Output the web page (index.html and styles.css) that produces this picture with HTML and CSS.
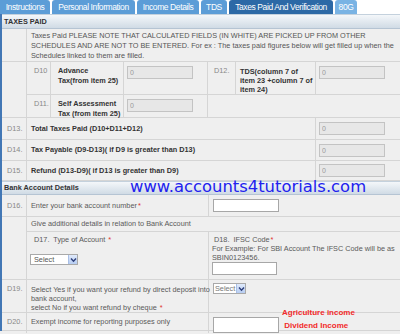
FILE: index.html
```html
<!DOCTYPE html>
<html>
<head>
<meta charset="utf-8">
<link rel="stylesheet" href="styles.css">
</head>
<body>
<div class="page">
  <nav class="tabs">
    <span class="tab tab-instr">Instructions</span>
    <span class="tab tab-personal">Personal Information</span>
    <span class="tab tab-income">Income Details</span>
    <span class="tab tab-tds">TDS</span>
    <span class="tab tab-active">Taxes Paid And Verification</span>
    <span class="tab tab-80g">80G</span>
  </nav>

  <div class="form">
    <div class="sec-head">TAXES PAID</div>

    <div class="row row-note">
      <div class="cell"></div>
      <div class="cell note">Taxes Paid PLEASE NOTE THAT CALCULATED FIELDS (IN WHITE) ARE PICKED UP FROM OTHER<br>SCHEDULES AND ARE NOT TO BE ENTERED. For ex : The taxes paid figures below will get filled up when the<br>Schedules linked to them are filled.</div>
    </div>

    <div class="row row-pair">
      <div class="cell"></div>
      <div class="pair">
        <div class="pc pnum">D10</div>
        <div class="pc plabel strong">Advance<br>Tax(from item 25)</div>
        <div class="pc pfield"><input class="inp ro" value="0" readonly></div>
        <div class="pc pnum pnum2">D12.</div>
        <div class="pc plabel plabel2 strong">TDS(column 7 of<br>item 23 +column 7 of<br>item 24)</div>
        <div class="pc pfield last"><input class="inp ro" value="0" readonly></div>

        <div class="pc pnum r2">D11.</div>
        <div class="pc plabel strong r2">Self Assessment<br>Tax (from item 25)</div>
        <div class="pc pfield r2"><input class="inp ro" value="0" readonly></div>
        <div class="pc pempty r2 last"></div>
      </div>
    </div>

    <div class="row row-3 h22">
      <div class="cell num">D13.</div>
      <div class="cell label strong">Total Taxes Paid (D10+D11+D12)</div>
      <div class="cell field"><input class="inp ro" value="0" readonly></div>
    </div>
    <div class="row row-3 h21">
      <div class="cell num">D14.</div>
      <div class="cell label strong">Tax Payable (D9-D13)( if D9 is greater than D13)</div>
      <div class="cell field"><input class="inp ro" value="0" readonly></div>
    </div>
    <div class="row row-3 h20">
      <div class="cell num">D15.</div>
      <div class="cell label strong">Refund (D13-D9)( if D13 is greater than D9)</div>
      <div class="cell field"><input class="inp ro" value="0" readonly></div>
    </div>

    <div class="sec-head sec-bank">Bank Account Details</div>

    <div class="row row-half h22">
      <div class="cell num">D16.</div>
      <div class="cell label">Enter your bank account number <span class="req">*</span></div>
      <div class="cell field2"><input class="inp white"></div>
    </div>

    <div class="row row-bank">
      <div class="cell"></div>
      <div class="bank">
        <div class="bc give">Give additional details in relation to Bank Account</div>
        <div class="bc d17">
          <div class="d17-label">D17.&nbsp; Type of Account <span class="req">*</span></div>
          <div class="sel sel-type"><span class="sel-text">Select</span><span class="sel-btn"><svg width="7" height="6" viewBox="0 0 7 6"><path d="M1 1.5 L3.5 4.2 L6 1.5" stroke="#2d3f7a" stroke-width="1.4" fill="none"/></svg></span></div>
        </div>
        <div class="bc d18">
          <div class="d18-title">&nbsp;D18.&nbsp; IFSC Code<span class="req">*</span></div>
          <div>For Example: For SBI Account The IFSC Code will be as<br>SBIN0123456.</div>
          <input class="inp white ifsc">
        </div>
      </div>
    </div>

    <div class="row row-half h33">
      <div class="cell num top">D19.</div>
      <div class="cell label top lh9">Select Yes if you want your refund by direct deposit into<br>bank account,<br>select No if you want refund by cheque <span class="req">*</span></div>
      <div class="cell field2 top"><div class="sel sel-yn"><span class="sel-text">Select</span><span class="sel-btn"><svg width="7" height="6" viewBox="0 0 7 6"><path d="M1 1.5 L3.5 4.2 L6 1.5" stroke="#2d3f7a" stroke-width="1.4" fill="none"/></svg></span></div></div>
    </div>

    <div class="row row-half h19">
      <div class="cell num top2">D20.</div>
      <div class="cell label top2">Exempt income for reporting purposes only</div>
      <div class="cell field2 top3"><input class="inp white tall"></div>
    </div>
  </div>

  <div class="watermark">www.accounts4tutorials.com</div>
  <div class="annot">Agriculture income<br>&nbsp;Dividend Income</div>
</div>
</body>
</html>
```
FILE: styles.css
```css
* { box-sizing: border-box; margin: 0; padding: 0; }

body {
  width: 400px;
  height: 334px;
  overflow: hidden;
  background: #fff;
  font-family: "Liberation Sans", Arial, sans-serif;
  font-size: 7.3px;
  line-height: 10px;
  color: #5a5a5a;
}

.page { position: relative; width: 400px; height: 334px; background: #efefef; }

/* tabs */
.tabs { display: flex; height: 14px; background: #fff; gap: 2px; }
.tab {
  height: 14px;
  background: #5c9dd7;
  color: #fff;
  font-size: 8.5px;
  letter-spacing: -0.4px;
  line-height: 14px;
  text-align: center;
  white-space: nowrap;
  border-radius: 3px 3px 0 0;
}
.tab-instr { width: 50px; border-top-left-radius: 0; }
.tab-personal { width: 83px; }
.tab-income { width: 62px; }
.tab-tds { width: 26px; }
.tab-active { width: 104px; background: #2c69a6; }
.tab-80g { width: 22px; background: #79b3e4; }

/* form */
.form { border-left: 2px solid #4277b5; background: #efefef; }

.sec-head {
  height: 15px;
  border-top: 1px solid #c4d1dd;
  border-bottom: 1px solid #b5c4d3;
  background: linear-gradient(#f4f7fa, #d0dbe5);
  font-weight: bold;
  color: #333;
  padding-left: 2px;
  line-height: 13px;
}
.sec-bank { height: 14px; line-height: 12px; }

.row { display: grid; border-bottom: 1px solid #d5d5d5; }
.cell { border-right: 1px solid #d5d5d5; display: flex; align-items: center; }
.cell:last-child { border-right: 0; }

.row-note { grid-template-columns: 25px 1fr; height: 33px; }
.note { display: block; padding: 2px 4px; white-space: nowrap; color: #555; }

.row-pair { grid-template-columns: 25px 1fr; height: 56px; }
.pair { display: grid; grid-template-columns: 24px 73px 84px 28px 80px 1fr; grid-template-rows: 33px 23px; }
.pc { border-right: 1px solid #d5d5d5; border-bottom: 1px solid #d5d5d5; padding-top: 4px; }
.pc.r2 { border-bottom: 0; padding-top: 4px; }
.pc.last { border-right: 0; }
.pnum { padding-left: 7px; color: #888; }
.pnum2 { padding-left: 6px; }
.plabel { padding-left: 7px; }
.plabel2 { padding-left: 4px; line-height: 9px; padding-top: 5px; }
.pfield { padding-left: 3px; }
.pempty { grid-column: 4 / 7; }

.strong { font-weight: bold; color: #333; }

.row-3 { grid-template-columns: 25px 289px 1fr; }
.row-half { grid-template-columns: 25px 182px 1fr; }
.h22 { height: 22px; }
.h21 { height: 21px; }
.h20 { height: 20px; }
.h33 { height: 33px; }
.h19 { height: 18px; }

.num { padding-left: 5px; color: #888; }
.label { padding-left: 4px; white-space: nowrap; }
.field { padding-left: 3px; }
.field2 { padding-left: 4px; }
.top { align-items: flex-start; padding-top: 4px; }
.top2 { align-items: flex-start; padding-top: 4px; }
.top3 { align-items: flex-start; padding-top: 4px; }
.lh9 { display: block; line-height: 9px; padding-top: 5px; }

.req { color: #e0302c; margin-left: 1px; }

.inp {
  display: block;
  width: 66px;
  height: 13px;
  border: 1px solid #c3c3c3;
  background: #e7e7e7;
  font-family: "Liberation Sans", Arial, sans-serif;
  font-size: 7px;
  color: #999;
  padding: 0 2px;
  outline: none;
}
.inp.ro { height: 13px; }
.inp.white { background: #fff; border-color: #a7a7a7; }
.inp.tall { height: 16px; }

/* bank account block */
.row-bank { grid-template-columns: 25px 1fr; height: 63px; border-bottom: 1px solid #d5d5d5; }
.bank { display: grid; grid-template-columns: 182px 1fr; grid-template-rows: 15px 48px; }
.bc { border-right: 1px solid #d5d5d5; }
.give { grid-column: 1 / 3; border-right: 0; border-bottom: 1px solid #d5d5d5; padding-left: 4px; line-height: 14px; }
.d17 { padding: 3px 0 0 3px; }
.d17-label { padding-left: 4px; margin-bottom: 9px; }
.d18 { border-right: 0; padding: 3px 0 0 3px; line-height: 9px; white-space: nowrap; }
.ifsc { width: 65px; height: 13px; }

/* custom select */
.sel { display: flex; width: 48px; height: 11px; border: 1px solid #a9a9a9; background: #fff; }
.sel-text { flex: 1; padding-left: 3px; line-height: 9px; color: #555; overflow: hidden; white-space: nowrap; }
.sel-btn {
  width: 9px;
  background: linear-gradient(#e0eafb, #b7cdf2);
  border-left: 1px solid #a9bfe6;
  display: flex;
  align-items: center;
  justify-content: center;
}
.sel-yn { width: 33px; margin-top: -1px; }
.sel-yn .sel-text { padding-left: 1px; color: #777; }

/* overlays */
.watermark {
  position: absolute;
  left: 130px;
  top: 179px;
  font-family: "DejaVu Sans", sans-serif;
  font-size: 16.4px;
  line-height: 16.4px;
  color: #2222ee;
  white-space: nowrap;
}
.annot {
  position: absolute;
  left: 282px;
  top: 306px;
  font-family: "Liberation Sans", Arial, sans-serif;
  font-weight: bold;
  font-size: 8px;
  line-height: 13px;
  color: #f22a2a;
  white-space: nowrap;
}
```
